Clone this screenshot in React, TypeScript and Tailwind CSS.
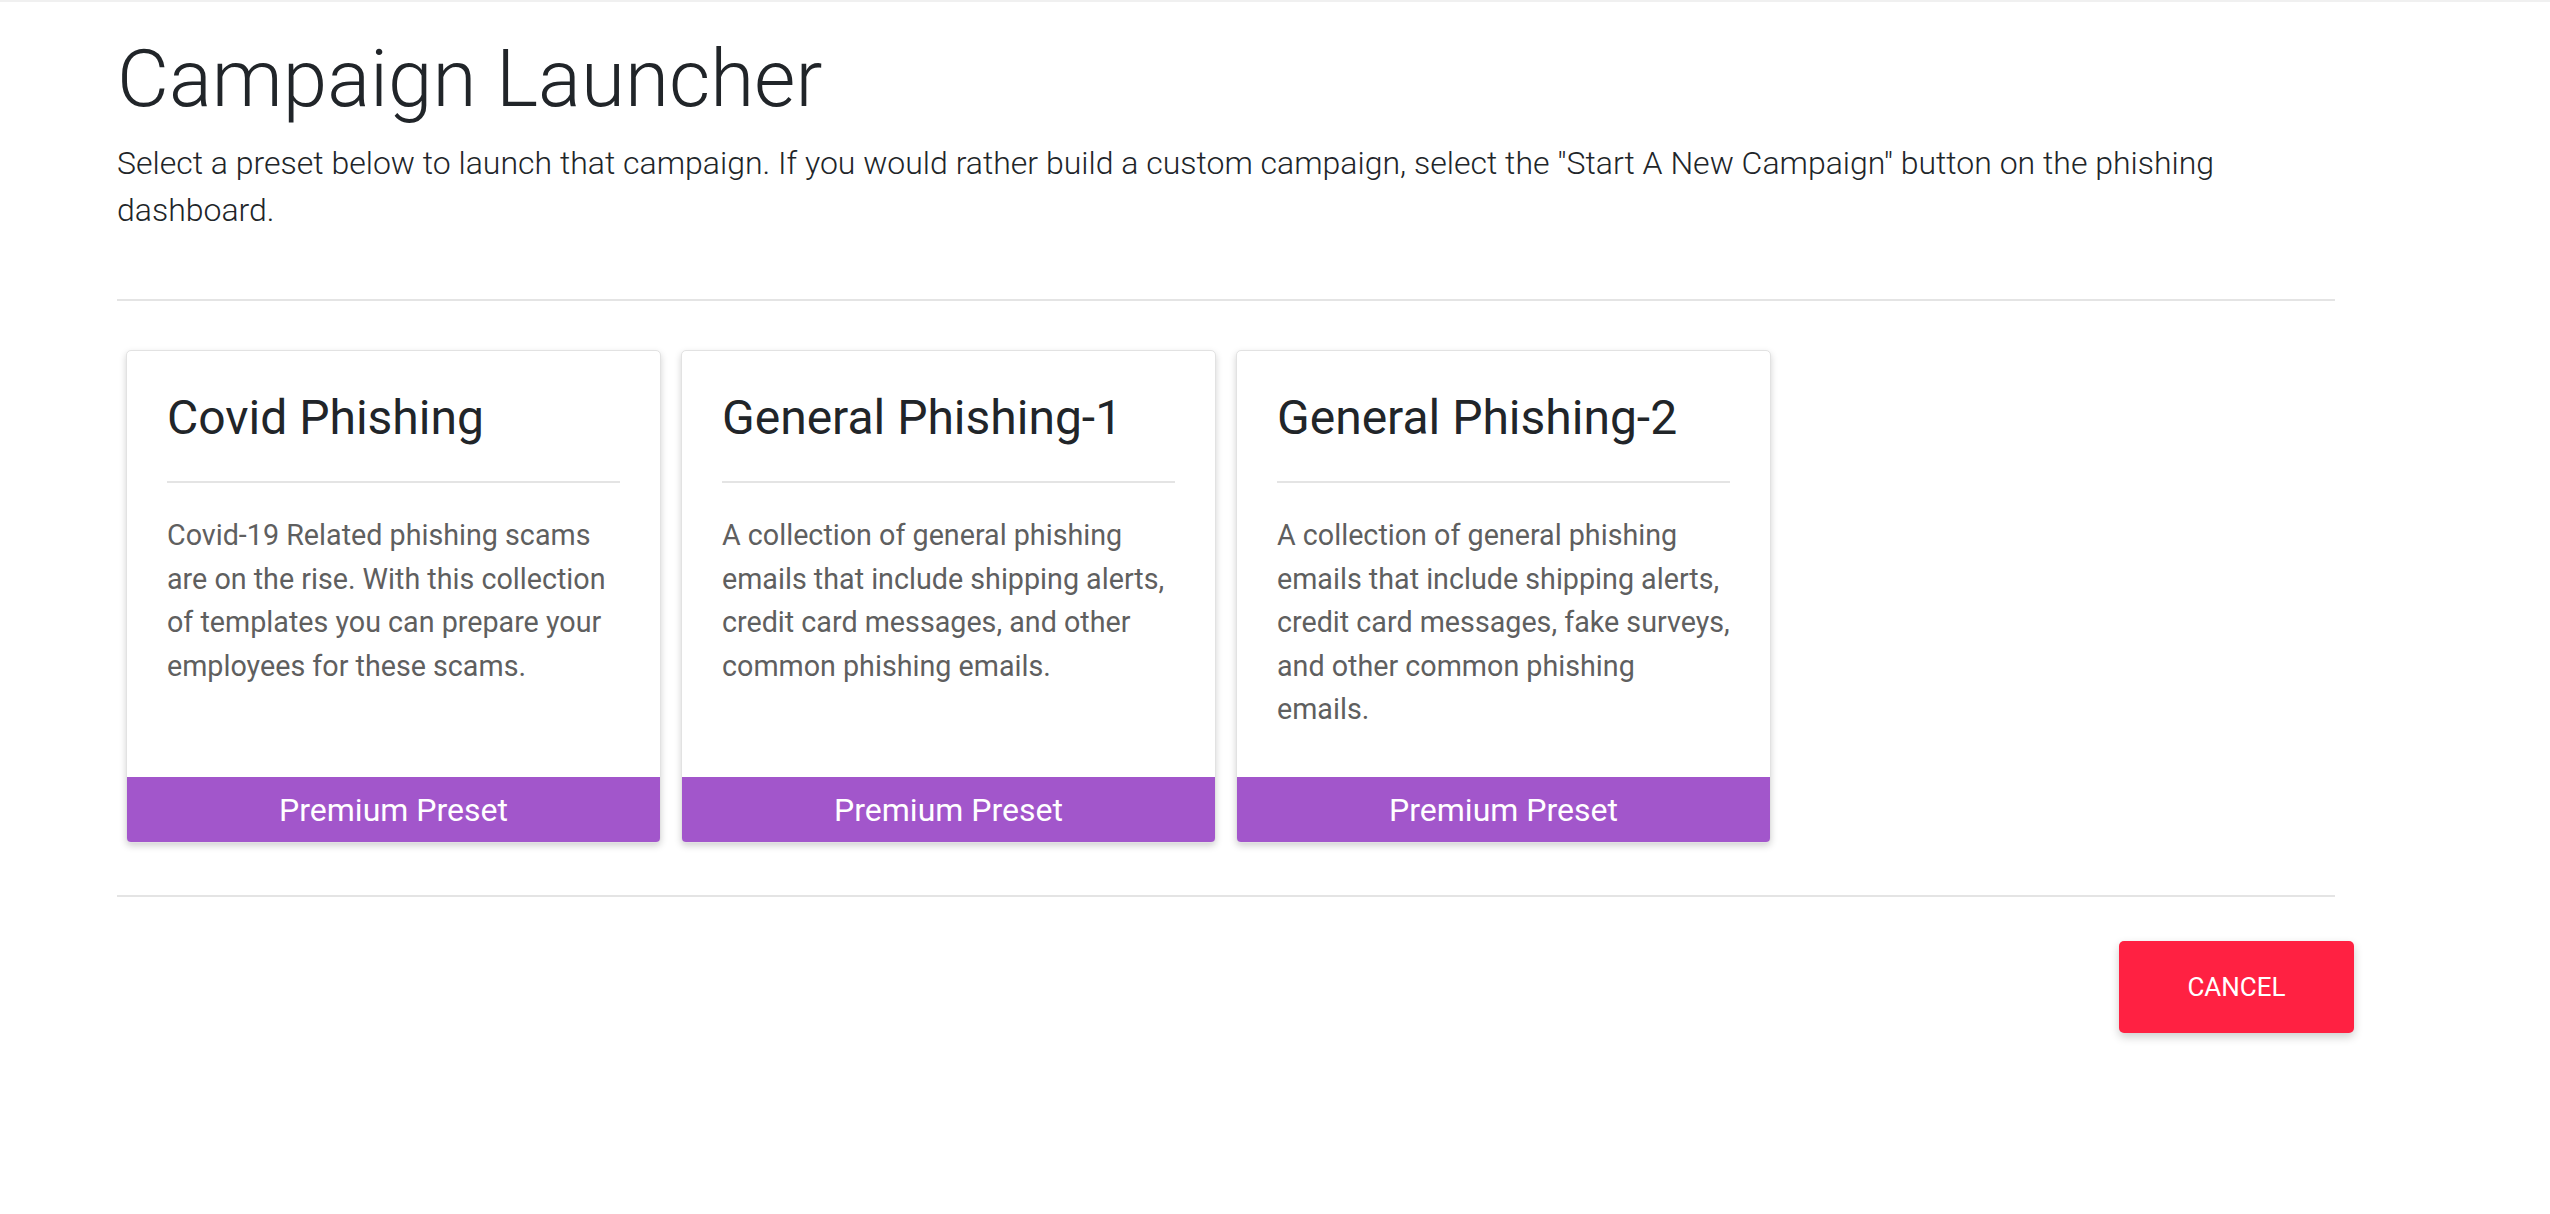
import React from "react";

const presets = [
  {
    title: "Covid Phishing",
    body: "Covid-19 Related phishing scams are on the rise. With this collection of templates you can prepare your employees for these scams.",
  },
  {
    title: "General Phishing-1",
    body: "A collection of general phishing emails that include shipping alerts, credit card messages, and other common phishing emails.",
  },
  {
    title: "General Phishing-2",
    body: "A collection of general phishing emails that include shipping alerts, credit card messages, fake surveys, and other common phishing emails.",
  },
];

const PresetCard = ({ title, body }: { title: string; body: string }) => (
  <div className="flex h-[493px] w-[535px] flex-col overflow-hidden rounded-[5px] border border-[#e2e2e2] bg-white shadow-[0_3px_7px_rgba(0,0,0,0.18)]">
    <div className="flex-1 px-[40px] pt-[38px]">
      <h2 className="text-[48px] font-normal leading-[58px] text-[#212529]">
        {title}
      </h2>
      <div className="mt-[34px] h-[2px] bg-[#e4e4e4]" />
      <p className="mt-[31px] text-[28.7px] leading-[43.5px] text-[#5f5f5f]">
        {body}
      </p>
    </div>
    <div className="flex h-[65px] items-center justify-center bg-[#a256cb] text-[32px] text-white">
      Premium Preset
    </div>
  </div>
);

export default function App() {
  return (
    <div className="min-h-[1214px] border-t-2 border-[#f0f0f0] bg-white font-['Roboto',sans-serif]">
      <div className="w-[2354px] pl-[117px]">
        <div className="w-[2218px]">
          <h1 className="mt-[29px] text-[80px] font-light leading-[96px] text-[#212529]">
            Campaign Launcher
          </h1>
          <p className="mt-[13px] text-[32px] font-light leading-[47px] text-[#212529]">
            Select a preset below to launch that campaign. If you would rather
            build a custom campaign, select the "Start A New Campaign" button
            on the phishing dashboard.
          </p>
          <div className="mt-[65px] h-[2px] bg-[#e4e4e4]" />
          <div className="mt-[49px] flex gap-[20px] pl-[9px]">
            {presets.map((p) => (
              <PresetCard key={p.title} title={p.title} body={p.body} />
            ))}
          </div>
          <div className="mt-[52px] h-[2px] bg-[#e4e4e4]" />
        </div>
        <div className="mt-[44px] flex justify-end">
          <button className="flex h-[92px] w-[235px] items-center justify-center rounded-[5px] bg-[#ff2142] text-[26px] uppercase text-white shadow-[0_4px_10px_rgba(0,0,0,0.2)]">
            Cancel
          </button>
        </div>
      </div>
    </div>
  );
}
